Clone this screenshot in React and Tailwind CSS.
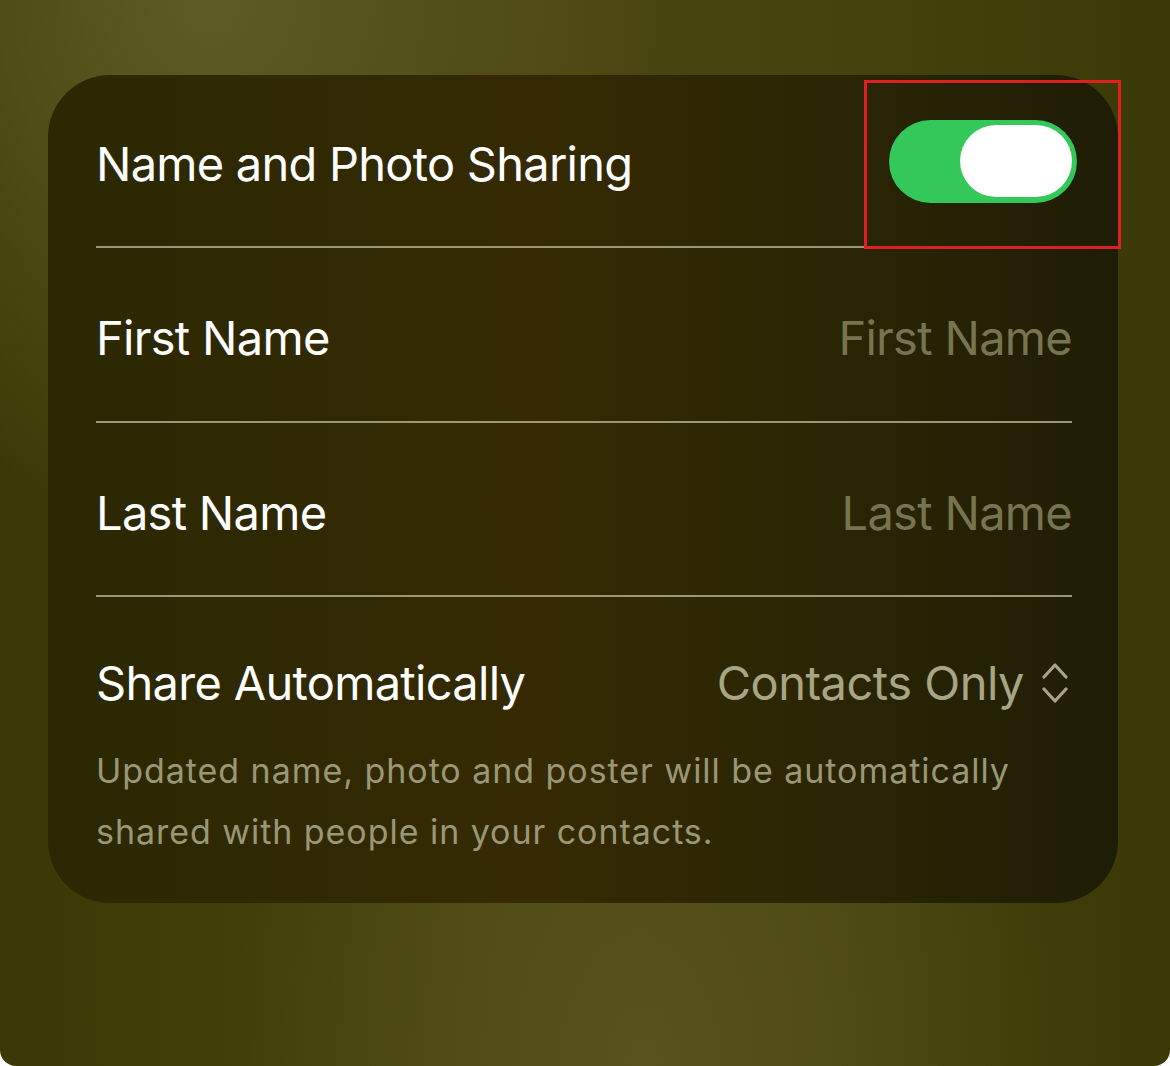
export default function App() {
  return (
    <div className="w-[1170px] h-[1066px] bg-white overflow-hidden">
      <div className="relative w-full h-full rounded-b-[16px] overflow-hidden bg-[radial-gradient(ellipse_at_18%_0%,#5f5b24_0%,rgba(95,91,36,0)_35%),radial-gradient(ellipse_at_55%_100%,#58531c_0%,rgba(88,83,28,0)_45%),linear-gradient(90deg,#3b3905_0%,#4a4510_45%,#47430e_70%,#3b3906_100%)] pt-[75px] pl-[48px] pr-[52px]" style={{ fontFamily: "Inter, 'Noto Sans', sans-serif" }}>
        <div className="rounded-[62px] bg-[linear-gradient(90deg,#2b2803_0%,#352a03_45%,#2c2604_70%,#1e1d05_100%)] pl-[48px] pr-[46px] pb-[41px]">
          <div className="h-[171px] pt-[6px] flex items-center justify-between">
            <span className="text-white text-[47px] leading-none tracking-[-0.75px]">Name and Photo Sharing</span>
            <div className="w-[188px] h-[83px] -mr-[5px] rounded-full bg-[#34c759] flex items-center justify-end pr-[5px] mt-[-5px]">
              <div className="w-[112px] h-[72px] rounded-full bg-white"></div>
            </div>
          </div>
          <div className="h-[2px] bg-[#9a9878]"></div>
          <div className="h-[173px] pt-[6px] flex items-center justify-between">
            <span className="text-white text-[47px] leading-none tracking-[-0.7px]">First Name</span>
            <span className="text-[#77744f] text-[47px] leading-none tracking-[-0.7px]">First Name</span>
          </div>
          <div className="h-[2px] bg-[#9a9878]"></div>
          <div className="h-[172px] pt-[6px] flex items-center justify-between">
            <span className="text-white text-[47px] leading-none tracking-[-0.7px]">Last Name</span>
            <span className="text-[#77744f] text-[47px] leading-none tracking-[-0.7px]">Last Name</span>
          </div>
          <div className="h-[2px] bg-[#9a9878]"></div>
          <div className="pt-[56px] flex items-center justify-between">
            <span className="text-white text-[47px] leading-[60px] tracking-[-0.7px]">Share Automatically</span>
            <div className="flex items-center gap-[18px]">
              <span className="text-[#a8a585] text-[47px] leading-[60px] tracking-[-0.5px]">Contacts Only</span>
              <svg width="26" height="48" viewBox="0 0 26 48" fill="none" stroke="#a8a585" strokeWidth="3.2" strokeLinecap="round" strokeLinejoin="round" className="mr-[4px]">
                <path d="M2 18 L13 6 L24 18" />
                <path d="M2 30 L13 42 L24 30" />
              </svg>
            </div>
          </div>
          <p className="mt-[27px] text-[#9a9777] text-[34px] leading-[61px] tracking-[0.95px]">
            Updated name, photo and poster will be automatically shared with people in your contacts.
          </p>
        </div>
        <div className="absolute left-[864px] top-[80px] w-[257px] h-[169px] border-[3px] border-[#e0201f]"></div>
      </div>
    </div>
  );
}
